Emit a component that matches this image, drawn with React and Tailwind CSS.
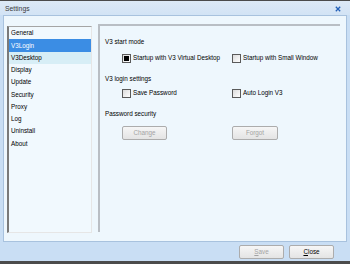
import React from 'react';

const items = ['General', 'V3Login', 'V3Desktop', 'Display', 'Update', 'Security', 'Proxy', 'Log', 'Uninstall', 'About'];

const Check = ({ checked }) => (
  <span className="flex h-[9px] w-[9px] shrink-0 items-center justify-center border border-[#5a5a5a] bg-gradient-to-br from-[#dcdcdc] to-white">
    {checked && <span className="h-[5px] w-[5px] bg-black" />}
  </span>
);

const Option = ({ label, checked }) => (
  <div className="flex h-[9px] items-center gap-[2px]">
    <Check checked={checked} />
    <span className="leading-none">{label}</span>
  </div>
);

const Btn = ({ children, disabled, className = '' }) => (
  <div
    className={`flex h-[14px] w-[45px] items-center justify-center rounded-[2px] border border-[#acacac] bg-gradient-to-b from-[#f6f6f6] to-[#e4e4e4] leading-none ${disabled ? 'text-[#a3a3a3]' : 'text-black'} ${className}`}
  >
    {children}
  </div>
);

export default function App() {
  return (
    <div className="flex h-[264px] w-[350px] flex-col bg-[#c9def4] text-[6.3px] text-black" style={{ fontFamily: '"Liberation Sans", Arial, sans-serif' }}>
      <div className="h-px bg-[#4b4b4b]" />
      <div className="flex h-[14px] items-center justify-between bg-gradient-to-b from-[#dde9f6] to-[#d2e3f5] pl-[5px] pr-[9px] pt-[2px]">
        <span className="text-[6.8px] text-[#3a3a3a]">Settings</span>
        <svg width="6" height="6" viewBox="0 0 6 6">
          <path d="M0.8 0.8L5.2 5.2M5.2 0.8L0.8 5.2" stroke="#2360b8" strokeWidth="1.3" />
        </svg>
      </div>
      <div className="mx-[3px] flex h-[227px] items-start gap-[6px] border border-[#a8c2de] bg-[#eef7fd] pl-[3px] pt-[8px]">
        <div className="mt-[2px] h-[207px] w-[85px] border-b border-l-2 border-r border-t border-b-[#e6e6e6] border-l-[#7a7a7a] border-r-[#e6e6e6] border-t-[#a5a5a5] bg-[#f1f9fe]">
          {items.map((it) => (
            <div
              key={it}
              className={`flex h-[12.25px] items-center pl-[2px] ${it === 'V3Login' ? 'bg-[#3b8de4] text-white' : it === 'V3Desktop' ? 'bg-[#d7eef6]' : ''}`}
            >
              {it}
            </div>
          ))}
        </div>
        <div className="flex h-[208px] w-[242px] flex-col border-l-2 border-t-2 border-l-[#b9bec4] border-t-[#b9bec4] pl-[5px]">
          <div className="mt-[12px] flex h-[8px] items-center">V3 start mode</div>
          <div className="ml-[17px] mt-[8px] flex">
            <div className="w-[110px]"><Option label="Startup with V3 Virtual Desktop" checked /></div>
            <Option label="Startup with Small Window" />
          </div>
          <div className="mt-[11.7px] flex h-[8px] items-center">V3 login settings</div>
          <div className="ml-[17px] mt-[6.3px] flex">
            <div className="w-[110px]"><Option label="Save Password" /></div>
            <Option label="Auto Login V3" />
          </div>
          <div className="mt-[12px] flex h-[8px] items-center">Password security</div>
          <div className="ml-[17px] mt-[8px] flex">
            <div className="w-[110px]"><Btn disabled>Change</Btn></div>
            <Btn disabled className="w-[46px]">Forgot</Btn>
          </div>
        </div>
      </div>
      <div className="flex h-[19px] items-center justify-end gap-[5px] pr-[16px] pt-[1px]">
        <Btn disabled><span><span className="underline decoration-[0.5px]">S</span>ave</span></Btn>
        <Btn><span><span className="underline decoration-[0.5px]">C</span>lose</span></Btn>
      </div>
      <div className="h-[3px] bg-[#4b4b4b]" />
    </div>
  );
}
